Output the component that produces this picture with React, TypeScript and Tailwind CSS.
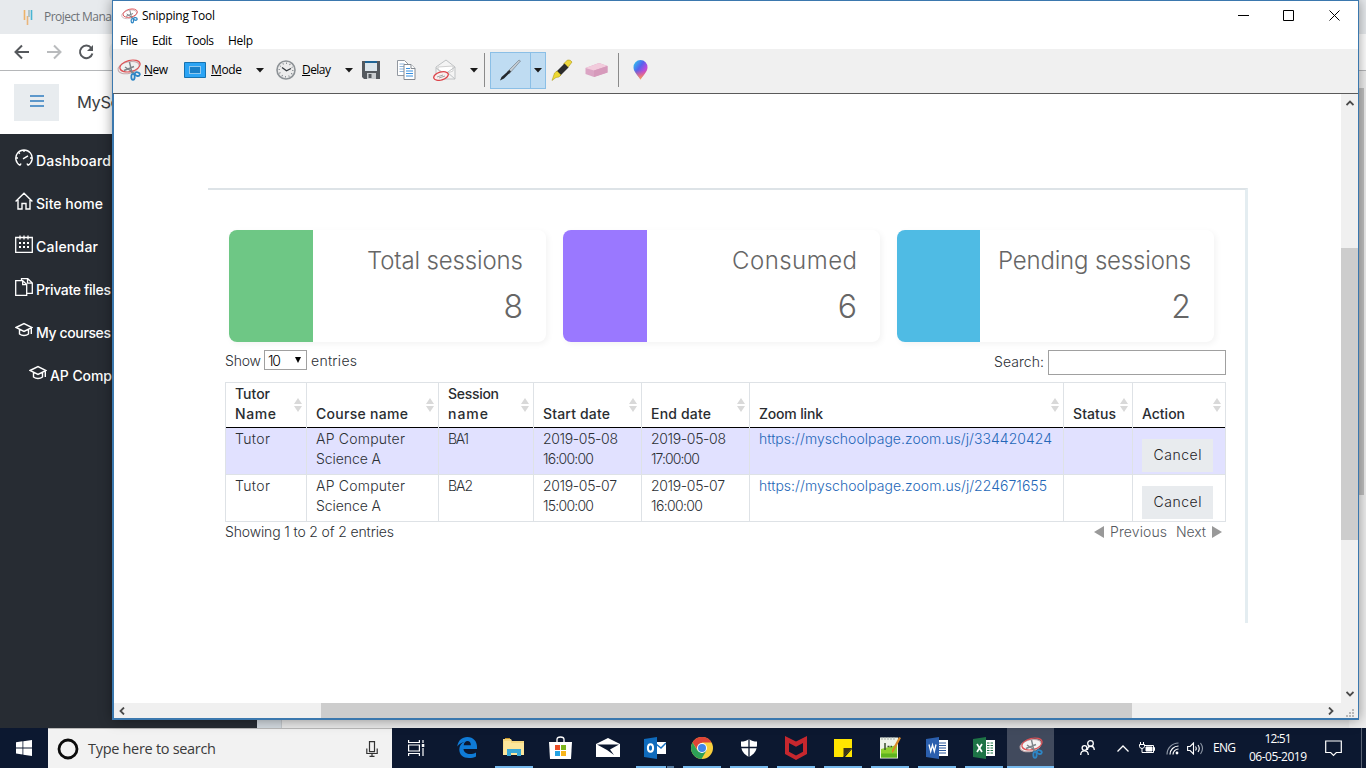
import { useLayoutEffect, useRef, type ReactNode } from "react";

/* Text whose tracking is adjusted so the run is `w` pixels wide. */
function T({ w, children, className = "" }: { w: number; children: string; className?: string }) {
  const ref = useRef<HTMLSpanElement>(null);
  useLayoutEffect(() => {
    const el = ref.current;
    if (!el) return;
    el.style.letterSpacing = "0px";
    const natural = el.getBoundingClientRect().width;
    const s = (w - natural) / Math.max(1, children.length - 1);
    el.style.letterSpacing = s + "px";
    el.style.marginRight = -s + "px";
  }, [w, children]);
  return (
    <span ref={ref} className={"inline-block whitespace-pre " + className}>
      {children}
    </span>
  );
}

const inter = "font-['Inter','Open_Sans',sans-serif]";
const segoe = "font-['Open_Sans','Noto_Sans',sans-serif]";

function Scissors({ className = "", filled = false }: { className?: string; filled?: boolean }) {
  return (
    <svg viewBox="0 0 24 22" className={className} fill="none">
      <ellipse cx="11.5" cy="8.500" rx="10.800" ry="5.800" transform="rotate(-14 12 8)" stroke="#c4a9ac" strokeWidth="1" fill={filled ? "#f3f3f3" : "none"} />
      <ellipse cx="13" cy="7" rx="10.3" ry="5.600" transform="rotate(-14 13 7)" stroke="#de5054" strokeWidth="1.2" />
      <path d="M12.500 3l2.500 11M8 8l9 6M7 11.500l10-4" stroke="#7e858b" strokeWidth="1.4" />
      <ellipse cx="16" cy="17.800" rx="1.700" ry="3" stroke="#2e86c5" strokeWidth="1.800" />
      <ellipse cx="20.3" cy="15" rx="2.500" ry="1.800" transform="rotate(15 20 15)" stroke="#2e86c5" strokeWidth="1.800" />
    </svg>
  );
}

function Caret({ className = "" }: { className?: string }) {
  return (
    <svg viewBox="0 0 8 5" className={"h-[5px] w-2 shrink-0 " + className}>
      <path d="M0 0h8L4 4.5z" fill="#1a1a1a" />
    </svg>
  );
}

function Cap() {
  return (
    <svg viewBox="0 0 18 18" className="h-[18px] w-[18px]" fill="none" stroke="#fff" strokeWidth="1.4">
      <path d="M1 6.500l8-4 8 4-8 4zM4.500 8.500v4.500c2.500 2 6.500 2 9 0V8.500M16.300 6.500v6.500" />
    </svg>
  );
}

const navIcons: Record<string, ReactNode> = {
  dash: (
    <svg viewBox="0 0 18 18" className="h-[18px] w-[18px]" fill="none" stroke="#fff" strokeWidth="1.4">
      <path d="M5 16.300A8.200 8.200 0 1 1 13 16.300M8 9.800l5-3M9 1v2M1 9h2M15 9h2M3.500 3.500l1.300 1.300M5 16.500l1-2M13 16.500l-1-2" />
    </svg>
  ),
  home: (
    <svg viewBox="0 0 18 18" className="h-[18px] w-[18px]" fill="none" stroke="#fff" strokeWidth="1.4">
      <path d="M.6 9.600L9 1.200l8.400 8.400M3 8v9h4v-5.500h4V17h4V8" />
    </svg>
  ),
  cal: (
    <svg viewBox="0 0 18 18" className="h-[18px] w-[18px]" fill="none" stroke="#fff" strokeWidth="1.3">
      <path d="M.7 2.500h16.600v14.800H.7zM5 .5v4M9 .5v4M13 .5v4" />
      <path d="M4 8h2M8 8h2M12 8h2M4 12h2M8 12h2M12 12h2" strokeWidth="2" />
    </svg>
  ),
  files: (
    <svg viewBox="0 0 18 18" className="h-[18px] w-[18px]" fill="none" stroke="#fff" strokeWidth="1.3">
      <path d="M.7 2.600h7l4 4v10.700H.7zM7.700 2.600v4h4M6.500 2.600V.7h6.300l4.500 4.300v10.300h-5.600M12.500.7v4.500h4.800" />
    </svg>
  ),
  cap: <Cap />,
};

const nav = [
  { icon: "dash", label: "Dashboard", w: 75 },
  { icon: "home", label: "Site home", w: 67 },
  { icon: "cal", label: "Calendar", w: 62 },
  { icon: "files", label: "Private files", w: 75 },
  { icon: "cap", label: "My courses", w: 75 },
  { icon: "cap", label: "AP Comp", w: 62, sub: true },
];

function BrowserWindow() {
  return (
    <div className="flex h-[728px] flex-col overflow-hidden bg-[#e8e8e8]">
      <div className={"flex h-[34px] shrink-0 items-center bg-[#e7eaed] pl-[23px] text-[12px] text-[#6d7175] " + segoe}>
        <svg viewBox="0 0 10 17" className="mr-[11px] h-[17px] w-[10px]" fill="none" strokeWidth="1.6">
          <path d="M1.500 1v10" stroke="#edb269" />
          <path d="M4.500 7v9" stroke="#e9b67c" />
          <path d="M6 1v7" stroke="#a4bcc0" />
          <path d="M8.500 1v10" stroke="#48b5d3" />
        </svg>
        <T w={68}>Project Mana</T>
      </div>
      <div className="flex h-9 shrink-0 items-center gap-4 bg-white pl-[14px]">
        <svg viewBox="0 0 16 16" className="h-4 w-4" fill="none" stroke="#55585c" strokeWidth="2"><path d="M15 8H2M8 1.500L1.500 8 8 14.500" /></svg>
        <svg viewBox="0 0 16 16" className="h-4 w-4" fill="none" stroke="#b9bbbd" strokeWidth="2"><path d="M1 8h13M8 1.500L14.500 8 8 14.500" /></svg>
        <svg viewBox="0 0 16 16" className="h-4 w-4" fill="none" stroke="#55585c" strokeWidth="2"><path d="M13.300 4A6.300 6.300 0 1 0 14.400 9.500" /><path d="M15 1v6H9z" fill="#55585c" stroke="none" /></svg>
        <div className="-ml-[1px] h-7 w-[200px] rounded-full bg-[#f1f3f4]" />
      </div>
      <div className="flex min-h-0 grow">
        <div className="flex grow flex-col">
          <div className={"flex h-16 shrink-0 items-center border-t border-[#b5b7b9] bg-white pl-[14px] " + inter}>
            <div className="flex h-[37px] w-[45px] items-center justify-center bg-[#e8ecef]">
              <svg viewBox="0 0 14 12" className="mb-1 h-3 w-[14px]" stroke="#2f7cc0" strokeWidth="1.400"><path d="M0 1h14M0 6h14M0 11h14" /></svg>
            </div>
            <T w={43} className="ml-[18px] text-[16.500px] text-[#3b3e42]">MySc</T>
          </div>
          <div className="flex min-h-0 grow">
            <div className={"flex w-[257px] shrink-0 flex-col bg-[#272c33] pt-[4px] pl-[15px] " + inter}>
              {nav.map((n) => (
                <div key={n.label} className={"flex h-[43px] items-center gap-[3px] text-[14px] font-medium text-white " + (n.sub ? "pl-[14px]" : "")}>
                  <div className="mb-[3px]">{navIcons[n.icon]}</div>
                  <T w={n.w} className="mt-px">{n.label}</T>
                </div>
              ))}
            </div>
            <div className="w-[25px] shrink-0 border-r border-[#c4c8cc] bg-[#d3dae0]" />
            <div className="grow bg-[#e8e8e8]" />
          </div>
        </div>
        <div className="w-[17px] shrink-0 border-t border-[#b5b7b9] bg-[#efefef] px-0.5 pt-[17px]">
          <div className="h-[407px] bg-[#c1c1c1]" />
        </div>
      </div>
    </div>
  );
}

function Toolbar() {
  return (
    <div className="flex h-[45px] shrink-0 items-center border-b border-[#5a5a5a] bg-[#f0f0f0] pb-[2px] pl-[4px] text-[12px] text-black">
      <Scissors className="h-[22px] w-6 shrink-0" />
      <T w={24} className="ml-[3px] first-letter:underline">New</T>
      <svg viewBox="0 0 22 16" className="ml-[16px] h-4 w-[22px] shrink-0">
        <path d="M.5.5h21v15H.5z" fill="#2ba4f5" stroke="#1572b0" />
        <path d="M5.500 4.500h11v7h-11z" fill="#197fc7" stroke="#fff" strokeDasharray="1 1" />
      </svg>
      <T w={31} className="ml-[5px] first-letter:underline">Mode</T>
      <Caret className="ml-[14px]" />
      <svg viewBox="0 0 20 20" className="ml-[12px] h-5 w-5 shrink-0" fill="none">
        <circle cx="10" cy="10" r="9" fill="#ececec" stroke="#8d9296" strokeWidth="1.600" />
        <circle cx="10" cy="10" r="6.800" stroke="#70767c" strokeWidth="1.400" strokeDasharray=".8 2.760" />
        <path d="M6 7.500l4.500 3.300L15 8.500" stroke="#33383d" strokeWidth="1.300" />
      </svg>
      <T w={29} className="ml-[6px] first-letter:underline">Delay</T>
      <Caret className="ml-[14px]" />
      <svg viewBox="0 0 18 18" className="ml-[9px] h-[18px] w-[18px] shrink-0">
        <path d="M0 0h18v18H2l-2-2z" fill="#54595e" />
        <path d="M3 0h12v10H3z" fill="#dce6ec" /><path d="M3 0h12v2H3z" fill="#1f6596" />
        <path d="M5 12h9v6H5z" fill="#c9cdd0" /><path d="M6.500 13h3v4h-3z" fill="#54595e" />
      </svg>
      <svg viewBox="0 0 19 20" className="ml-[17px] h-5 w-[19px] shrink-0" fill="#fff">
        <path d="M.5.5h7l3.500 3.500v11.500H.5z" stroke="#9298a0" />
        <path d="M2.500 4h5M2.500 6.500h5M2.500 9h5M2.500 11.500h5" stroke="#8db3da" />
        <path d="M7 4.500h7l4 4v11H7z" stroke="#848a92" />
        <path d="M9 8.500h4M9 11h7M9 13.500h7M9 16h7" stroke="#368fe0" strokeWidth="1.200" /><path d="M14 4.500v4h4" stroke="#848a92" />
      </svg>
      <svg viewBox="0 0 23 22" className="ml-[17px] h-[22px] w-[23px] shrink-0" fill="none">
        <path d="M3 8l10-7 9 7v12H3z" fill="#f4f4f4" stroke="#bfc2c4" /><path d="M5 8l15-1v5l-8 3-7-4z" fill="#fff" stroke="#d0d0d0" /><path d="M3 9l9 6 10-7M22 20l-8-7" stroke="#bfc2c4" />
        <ellipse cx="8" cy="17" rx="7.500" ry="4" transform="rotate(-16 8 17)" fill="#f8eeee" stroke="#dc4248" strokeWidth="1.300" />
        <path d="M4 18l6-2M6 19l6-2" stroke="#a6a6a6" />
      </svg>
      <Caret className="ml-[14px]" />
      <div className="ml-[6px] h-[34px] w-px shrink-0 bg-[#8a8a8a]" />
      <div className="ml-[5px] flex h-[37px] w-14 shrink-0 border border-[#8bbfe6] bg-[#bfdcf2]">
        <div className="flex w-[40px] items-center justify-center border-r border-[#8bbfe6]">
          <svg viewBox="0 0 22 22" className="h-[22px] w-[22px]">
            <path d="M20 1l1.500 1L10 15l-2-2z" fill="#c4ccd2" stroke="#75838e" strokeWidth=".7" /><path d="M10.500 11l1.500 1.500L5 19.500 1 21.500l1.500-3.500z" fill="#23282d" />
          </svg>
        </div>
        <div className="flex grow items-center justify-center"><Caret /></div>
      </div>
      <svg viewBox="0 0 22 22" className="ml-[5px] h-[22px] w-[22px] shrink-0">
        <path d="M12.500 5l4-4q3-.5 4.500 2l-4.500 6z" fill="#efd83c" stroke="#a89413" strokeWidth=".6" />
        <path d="M5 13l8.500-8.500 4 4L9 17z" fill="#2c2c2c" />
        <path d="M3.500 14L6 12l4 4-2 2-3 .5L1 21.500z" fill="#edd832" stroke="#a89413" strokeWidth=".5" />
      </svg>
      <svg viewBox="0 0 23 16" className="ml-[12px] h-4 w-[23px] shrink-0">
        <path d="M.5 6L14 1l8.500 3v6.500L9 15 .5 12z" fill="#dba5c4" /><path d="M.5 6L14 1l8.500 3L9 8.500z" fill="#f2cbdc" /><path d="M9 8.500V15l13.500-4.500V4z" fill="#d69abb" />
      </svg>
      <div className="ml-[10px] h-[34px] w-px shrink-0 bg-[#8a8a8a]" />
      <svg viewBox="0 0 15 20" className="ml-[14px] h-5 w-[15px] shrink-0">
        <defs>
          <linearGradient id="drop" x1="0" y1="0" x2="1" y2="1"><stop offset="0" stopColor="#27d8ec" /><stop offset=".4" stopColor="#5562ee" /><stop offset=".65" stopColor="#b94bdc" /><stop offset="1" stopColor="#f86f52" /></linearGradient>
          <linearGradient id="tip" x1="0" y1="0" x2="0" y2="1"><stop offset=".5" stopColor="#f85776" stopOpacity="0" /><stop offset="1" stopColor="#f7b046" /></linearGradient>
        </defs>
        <path d="M7.500 0a7.200 7.200 0 0 1 7 7.500c0 4-4 7.500-7 12-3-4.500-7-8-7-12A7.200 7.200 0 0 1 7.500 0z" fill="url(#drop)" />
        <path d="M7.500 0a7.200 7.200 0 0 1 7 7.500c0 4-4 7.500-7 12-3-4.500-7-8-7-12A7.200 7.200 0 0 1 7.500 0z" fill="url(#tip)" />
      </svg>
    </div>
  );
}

const cards = [
  { title: "Total sessions", w: 156, value: "8", color: "w-[84px] bg-[#6ec785]" },
  { title: "Consumed", w: 125, value: "6", color: "w-[84px] bg-[#9a78ff]" },
  { title: "Pending sessions", w: 193, value: "2", color: "w-[83px] bg-[#4fbbe4]" },
];

type Run = [string, number];
const headers: Run[][] = [
  [["Tutor", 35], ["Name", 41]],
  [["Course name", 92]],
  [["Session", 51], ["name", 40]],
  [["Start date", 67]],
  [["End date", 60]],
  [["Zoom link", 64]],
  [["Status", 43]],
  [["Action", 43]],
];
const rows: Run[][][] = [
  [[["Tutor", 35]], [["AP Computer", 89], ["Science A", 65]], [["BA1", 21]], [["2019-05-08", 75], ["16:00:00", 51]], [["2019-05-08", 75], ["17:00:00", 49]], [["https://myschoolpage.zoom.us/j/334420424", 293]], []],
  [[["Tutor", 35]], [["AP Computer", 89], ["Science A", 65]], [["BA2", 25]], [["2019-05-07", 74], ["15:00:00", 51]], [["2019-05-07", 74], ["16:00:00", 52]], [["https://myschoolpage.zoom.us/j/224671655", 288]], []],
];
const cols = "grid grid-cols-[81px_132px_95px_108px_108px_314px_69px_93px]";

function Sort() {
  return (
    <svg viewBox="0 0 8 14" className="absolute top-[15px] right-[4px] h-[14px] w-2" fill="#d9d9d9">
      <path d="M4 0l4 6H0zM0 8h8l-4 6z" />
    </svg>
  );
}

function Sessions() {
  return (
    <div className={"w-[1001px] text-[14px] font-light text-[#2c3035] " + inter}>
      <div className="flex gap-[17px] pl-1">
        {cards.map((c) => (
          <div key={c.title} className="flex h-28 w-[317px] overflow-hidden rounded-lg bg-white shadow-[2px_2px_6px_rgba(0,0,0,0.05)]">
            <div className={"shrink-0 " + c.color} />
            <div className="flex grow flex-col items-end pt-[13px] pr-[23px] text-[#666]">
              <T w={c.w} className="text-[24px] leading-9">{c.title}</T>
              <span className="text-[32px] leading-[56px]">{c.value}</span>
            </div>
          </div>
        ))}
      </div>
      <div className="flex h-10 justify-between pt-2">
        <div className="flex h-5 items-center">
          <T w={36}>Show</T>
          <div className="ml-[3px] flex h-5 w-[43px] items-center justify-between border border-[#a0a0a0] bg-white pr-[5px] pl-[3px] text-black">
            <T w={13}>10</T>
            <svg viewBox="0 0 6 6" className="h-1.5 w-1.5"><path d="M0 0h6L3 6z" fill="#000" /></svg>
          </div>
          <T w={46} className="ml-[4px]">entries</T>
        </div>
        <div className="flex h-[25px] items-center">
          <T w={50} className="-mt-[2px]">Search:</T>
          <div className="ml-[4px] h-[25px] w-[178px] border border-[#a0a0a0] bg-white" />
        </div>
      </div>
      <div className="border-t border-l border-[#dee2e6]">
        <div className={cols + " h-11 font-medium text-[#2a2d31]"}>
          {headers.map((h, i) => (
            <div key={i} className="relative flex flex-col justify-end border-r border-[#dee2e6] pb-[3px] pl-[9px] leading-5">
              {h.map(([t, w]) => <div key={t} className="h-5"><T w={w}>{t}</T></div>)}
              <Sort />
            </div>
          ))}
        </div>
        <div className={cols}>
          {headers.map((_, i) => <div key={i} className="h-px border-r border-[#dee2e6] bg-black" />)}
        </div>
        {rows.map((r, ri) => (
          <div key={ri} className={cols + " h-[47px] border-b border-[#dee2e6] " + (ri === 0 ? "bg-[#e1e1ff]" : "bg-white")}>
            {r.map((c, i) => (
              <div key={i} className={"border-r border-[#dee2e6] pt-[1px] pl-[9px] leading-5 " + (i === 5 ? "text-[#2467b8]" : "")}>
                {c.map(([t, w]) => <div key={t} className="h-5"><T w={w}>{t}</T></div>)}
              </div>
            ))}
            <div className="border-r border-[#dee2e6] pt-[11px] pl-[9px]">
              <div className="flex h-[33px] w-[71px] items-center justify-center bg-[#e8ebee] pb-[3px] text-[#1f2327]">
                <T w={48}>Cancel</T>
              </div>
            </div>
          </div>
        ))}
      </div>
      <div className="flex h-5 items-center justify-between pb-px">
        <T w={169}>Showing 1 to 2 of 2 entries</T>
        <div className="flex items-center pr-[4px] text-[#55595e]">
          <svg viewBox="0 0 10 12" className="mr-[6px] h-3 w-[10px]"><path d="M10 0v12L0 6z" fill="#999" /></svg>
          <T w={57}>Previous</T>
          <T w={30} className="ml-[9px]">Next</T>
          <svg viewBox="0 0 10 12" className="ml-[6px] h-3 w-[10px]"><path d="M0 0v12l10-6z" fill="#999" /></svg>
        </div>
      </div>
    </div>
  );
}

function Chevron({ d }: { d: string }) {
  return <svg viewBox="0 0 8 8" className="h-2 w-2" fill="none" stroke="#4a4a4a" strokeWidth="1.800"><path d={d} /></svg>;
}

function SnippingTool() {
  return (
    <div className={"absolute top-0 left-[112px] flex h-[720px] w-[1247px] flex-col border border-b-[1px] border-[#3b78ae] bg-white shadow-[0_0_12px_rgba(0,0,0,0.4)] " + segoe}>
      <div className="flex h-[30px] shrink-0 items-center justify-between pl-[8px] text-[12px] text-black">
        <div className="flex items-center gap-[4px]">
          <Scissors className="h-4 w-[17px]" />
          <T w={73}>Snipping Tool</T>
        </div>
        <div className="flex items-center pr-[18px] pb-px">
          <svg viewBox="0 0 11 11" className="h-[11px] w-[11px]" stroke="#000"><path d="M0 5.500h11" /></svg>
          <svg viewBox="0 0 11 11" className="ml-[34px] h-[11px] w-[11px]" fill="none" stroke="#000"><path d="M.5.5h10v10H.5z" /></svg>
          <svg viewBox="0 0 11 11" className="ml-[35px] h-[11px] w-[11px]" stroke="#000"><path d="M.5.5l10 10M10.500.5l-10 10" /></svg>
        </div>
      </div>
      <div className="flex h-[18px] shrink-0 items-center gap-[14px] pt-[2px] pl-[7px] text-[12px] text-black">
        <T w={18}>File</T>
        <T w={20}>Edit</T>
        <T w={28}>Tools</T>
        <T w={25}>Help</T>
      </div>
      <Toolbar />
      <div className="flex h-[609px] shrink-0 border-l border-[#3b78ae]">
        <div className="grow pt-[94px] pl-[94px]">
          <div className="h-[435px] w-[1040px] border-t-2 border-r-[3px] border-[#e4edf1] border-t-[#dde3e7] pt-10 pl-[17px]">
            <Sessions />
          </div>
        </div>
        <div className="flex w-[17px] shrink-0 flex-col items-center bg-[#f0f0f0] pt-[5px] pb-[5px]">
          <Chevron d="M.5 6L4 2.500 7.500 6" />
          <div className="mt-[141px] h-[292px] w-full bg-[#cdcdcd]" />
          <div className="mt-auto"><Chevron d="M.5 2L4 5.500 7.500 2" /></div>
        </div>
      </div>
      <div className="flex h-[15px] shrink-0 items-center border-l border-[#3b78ae] bg-[#f0f0f0] pl-[4px]">
        <Chevron d="M6 .5L2.500 4 6 7.500" />
        <div className="ml-[195px] h-full w-[811px] bg-[#cdcdcd]" />
        <div className="ml-auto mr-[11px]"><Chevron d="M2 .5L5.500 4 2 7.500" /></div>
        <svg viewBox="0 0 8 8" className="mt-1 mr-[4px] h-2 w-2" fill="#b8b8b8"><path d="M6 0h2v2H6zM3 3h2v2H3zM6 3h2v2H6zM0 6h2v2H0zM3 6h2v2H3zM6 6h2v2H6z" /></svg>
      </div>
      <div className="grow bg-[#3b78ae]" />
    </div>
  );
}

const apps: { name: string; open: boolean; icon: ReactNode }[] = [
  { name: "edge", open: false, icon: (
    <svg viewBox="0 0 20 21" className="h-[21px] w-5"><path d="M.3 9.500C1 3.500 5 0 10.300 0 16.500 0 20 4.500 20 9.500V12H6.500c.3 3.500 3.300 5 6.500 5 2.300 0 4.200-.6 6-1.600V19.500c-2 1-4.500 1.500-7 1.500-6 0-9.700-3.500-9.700-8.500 0-3.700 2-6.500 5.200-7.800C4.800 5.400 2 7 .3 9.500zM6.700 8.200h7.200C13.900 5.500 12.500 4 10.500 4c-2 0-3.500 1.700-3.800 4.200z" fill="#0f7bd7" /></svg>
  ) },
  { name: "explorer", open: true, icon: (
    <svg viewBox="0 0 22 19" className="h-[19px] w-[22px]"><path d="M0 1h8l1 2h12v14H0z" fill="#f6d77e" /><path d="M1 3h7v2h13v12H0z" fill="#fce69b" /><path d="M4 11h14v7h-4v-3H8v3H4z" fill="#38a8d8" /><path d="M2 0h5v1H2z" fill="#c8972c" /></svg>
  ) },
  { name: "store", open: false, icon: (
    <svg viewBox="0 0 23 23" className="h-[23px] w-[23px]"><path d="M8 6V3.500Q8 1 11.500 1T15 3.500V6" fill="none" stroke="#fff" strokeWidth="1.300" /><path d="M0 6h23l-1 17H1z" fill="#fff" /><path d="M6 9h5v5H6z" fill="#e94d27" /><path d="M12 9h5v5h-5z" fill="#7db51b" /><path d="M6 15h5v5H6z" fill="#24a3e3" /><path d="M12 15h5v5h-5z" fill="#f7b41a" /></svg>
  ) },
  { name: "mail", open: false, icon: (
    <svg viewBox="0 0 24 19" className="h-[19px] w-6"><path d="M0 6l12-6 12 6v13H0z" fill="#fff" /><path d="M1 6.500h22L14 11.500l4 5.500-7-5z" fill="#0c1830" /></svg>
  ) },
  { name: "outlook", open: true, icon: (
    <svg viewBox="0 0 22 22" className="h-[22px] w-[22px]"><path d="M12 5h10v12H12z" fill="#fff" /><path d="M12 7l5 4 5-5" fill="none" stroke="#1672c4" strokeWidth="1.500" /><path d="M0 2l13-2v22L0 20z" fill="#0f6bbd" /><ellipse cx="6.500" cy="11" rx="2.600" ry="3.700" fill="none" stroke="#fff" strokeWidth="2" /></svg>
  ) },
  { name: "chrome", open: true, icon: (
    <svg viewBox="0 0 22 22" className="h-[22px] w-[22px]"><circle cx="11" cy="11" r="11" fill="#f9cf3d" /><path d="M1.500 5.500A11 11 0 0 1 20.600 5.500H11L7 13.500z" fill="#df4437" /><path d="M1.500 5.500A11 11 0 0 0 10.500 22l5-8.500-9 0z" fill="#2da057" /><circle cx="11" cy="11" r="5" fill="#fff" /><circle cx="11" cy="11" r="4" fill="#4285e8" /></svg>
  ) },
  { name: "defender", open: true, icon: (
    <svg viewBox="0 0 16 18" className="h-[18px] w-4"><path d="M8 0c2.500 2 5 2.500 8 2.500C16.500 11 14 15 8 18 2 15-.5 11 0 2.500 3 2.500 5.500 2 8 0z" fill="#fff" /><path d="M8 0v18M0 8.500h16" stroke="#0c1830" strokeWidth="1.300" /></svg>
  ) },
  { name: "mcafee", open: true, icon: (
    <svg viewBox="0 0 22 24" className="h-6 w-[22px]"><path d="M0 0l11 5.500L22 0v18l-11 6-11-6zM4 7v8.800l7 3.800 7-3.800V7l-7 3.700z" fill="#c6272e" fillRule="evenodd" /></svg>
  ) },
  { name: "notes", open: true, icon: (
    <svg viewBox="0 0 18 18" className="h-[18px] w-[18px]"><path d="M0 0h18v9l-9 9H0z" fill="#ffe500" /><path d="M9.500 9H18l-8.500 9z" fill="#3b3418" /><path d="M11 18l7-8v8z" fill="#ffe500" /></svg>
  ) },
  { name: "notepad", open: true, icon: (
    <svg viewBox="0 0 22 24" className="h-6 w-[22px]">
      <path d="M1 1.500h18v21H1z" fill="#eef4e9" /><path d="M2 13l16-4v12.500H2z" fill="#8fd12f" /><path d="M2 17.500h16v4H2z" fill="#5fb41f" />
      <path d="M3 1v3M6 1v3M9 1v3M12 1v3M15 1v3" stroke="#a8afad" />
      <path d="M6 7v7" stroke="#38502b" strokeWidth="1.500" /><path d="M8.500 10.500h2M11.500 10.500h1.500" stroke="#38502b" strokeWidth="1.500" />
      <path d="M20 1l2 1-7 13-2 2v-3z" fill="#d98a27" />
    </svg>
  ) },
  { name: "word", open: true, icon: (
    <svg viewBox="0 0 22 22" className="h-[22px] w-[22px]"><path d="M11 3h11v16H11z" fill="#fff" /><path d="M13 6h7M13 8.500h7M13 11h7M13 13.500h7M13 16h7" stroke="#2b579a" /><path d="M0 2l13-2v22L0 20z" fill="#2b5fae" /><path d="M3 7.500l1.700 7L6.500 8l1.800 6.500L10 7.500" fill="none" stroke="#fff" strokeWidth="1.300" /></svg>
  ) },
  { name: "excel", open: true, icon: (
    <svg viewBox="0 0 22 22" className="h-[22px] w-[22px]"><path d="M11 3h11v16H11z" fill="#fff" /><path d="M14 6h6M14 8.500h6M14 11h6M14 13.500h6M14 16h6" stroke="#1d7446" /><path d="M17 4v14" stroke="#fff" /><path d="M0 2l13-2v22L0 20z" fill="#1d7446" /><path d="M4 7l5 8M9 7l-5 8" stroke="#fff" strokeWidth="1.700" /></svg>
  ) },
  { name: "snip", open: true, icon: <Scissors filled className="h-[22px] w-6" /> },
];

function Taskbar() {
  return (
    <div className={"flex h-10 items-center bg-[#0c1830] text-white " + segoe}>
      <div className="flex h-full w-12 items-center justify-center">
        <svg viewBox="0 0 16 16" className="h-4 w-4" fill="#fff"><path d="M0 2.300l6.500-1V7.500H0zM7.300 1.200L16 0v7.500H7.300zM0 8.400h6.500v6.200l-6.500-1zM7.300 8.400H16V16l-8.700-1.200z" /></svg>
      </div>
      <div className="flex h-full w-[344px] items-center border-t border-[#b9b9b9] bg-[#f2f2f2] pl-[9px] text-[#3a3a3a]">
        <svg viewBox="0 0 22 22" className="h-[22px] w-[22px]" fill="none"><circle cx="11" cy="11" r="9" stroke="#0b0b0b" strokeWidth="2.800" /></svg>
        <T w={128} className="ml-[9px] text-[14.500px]">Type here to search</T>
        <svg viewBox="0 0 12 16" className="mr-[14px] ml-auto h-4 w-3" fill="none" stroke="#333" strokeWidth="1.200"><path d="M3.500.6h5v10h-5zM.8 7.500v5h10.400v-5M6 12.500v3M3.500 15.400h5" /></svg>
      </div>
      <div className="flex h-full w-[51px] items-center pl-4">
        <svg viewBox="0 0 17 16" className="h-4 w-[17px]" fill="none" stroke="#fff" strokeWidth="1.200"><path d="M.6 0v2.500h10.800V0M.6 5h10.800v6H.6zM.6 16v-2.500h10.800V16M15 0v3M15 8v8" /><path d="M13.800 4h2.500v3h-2.500z" fill="#fff" stroke="none" /></svg>
      </div>
      {apps.map((a) => (
        <div key={a.name} className={"flex h-full w-[47px] shrink-0 flex-col items-center " + (a.name === "snip" ? "bg-[#414a5d]" : "")}>
          <div className="flex h-[38px] items-center pt-px">{a.icon}</div>
          {a.open && (
            <div className={"flex h-0.5 justify-end bg-[#76b9ed] " + (a.name === "snip" ? "w-full" : "w-[38px]")}>
              {a.name === "outlook" && <div className="h-full w-2 border-l border-[#0c1830] bg-[#54799f]" />}
            </div>
          )}
        </div>
      ))}
      <svg viewBox="0 0 15 16" className="ml-[26px] h-4 w-[15px] shrink-0" fill="none" stroke="#fff" strokeWidth="1.300"><circle cx="10.500" cy="3.500" r="2.800" /><path d="M7.500 10c0-5 6.500-5 6.800 0" /><circle cx="4.500" cy="8" r="2.400" /><path d="M.7 15c0-5.500 7.500-5.500 7.600 0" /></svg>
      <svg viewBox="0 0 12 7" className="ml-[22px] h-[7px] w-3 shrink-0" fill="none" stroke="#fff" strokeWidth="1.300"><path d="M.5 6.500L6 1l5.500 5.500" /></svg>
      <svg viewBox="0 0 16 12" className="ml-[10px] h-3 w-4 shrink-0" fill="none" stroke="#fff"><path d="M5 3.500h9.500v7H5.500M14.500 5.500h1v3h-1" /><path d="M7 5h6v4H7z" fill="#fff" /><path d="M1.500 0v2M4.500 0v2M.5 2.500h5v2q-.5 2-2.500 2t-2.500-2zM3 6.500v4h3" /></svg>
      <svg viewBox="0 0 13 13" className="ml-[11px] h-[13px] w-[13px] shrink-0" fill="none" stroke="#fff" strokeWidth="1.200"><path d="M1 12.500A11.500 11.500 0 0 1 12.500 1" stroke="#8f98a6" /><path d="M4 12.500A8.500 8.500 0 0 1 12.500 4M7 12.500A5.500 5.500 0 0 1 12.500 7" /><circle cx="11" cy="11" r="1.400" fill="#fff" stroke="none" /></svg>
      <svg viewBox="0 0 17 13" className="ml-[8px] h-[13px] w-[17px] shrink-0" fill="none" stroke="#fff" strokeWidth="1.100"><path d="M.6 4.500h2.500L6.500 1v11L3.100 8.500H.6zM8.500 4.500q1.500 2 0 4M11 3q2.500 3.500 0 7" /><path d="M13.500 1q4 5.500 0 11" stroke="#8f98a6" /></svg>
      <T w={23} className="ml-[9px] text-[12px]">ENG</T>
      <div className="ml-[13px] flex w-[58px] flex-col items-center text-[12px] leading-[18px]">
        <T w={27}>12:51</T>
        <T w={58}>06-05-2019</T>
      </div>
      <svg viewBox="0 0 17 17" className="ml-[18px] h-[17px] w-[17px] shrink-0" fill="none" stroke="#fff" strokeWidth="1.200"><path d="M.7 1h15.600v11.500h-5L8.500 15.300l-2.800-2.800h-5z" /></svg>
      <div className="ml-[19px] h-full w-px bg-[#5a6374]" />
    </div>
  );
}

export default function App() {
  return (
    <div className="relative h-[768px] w-[1366px] overflow-hidden bg-[#e8e8e8]">
      <BrowserWindow />
      <Taskbar />
      <SnippingTool />
    </div>
  );
}
